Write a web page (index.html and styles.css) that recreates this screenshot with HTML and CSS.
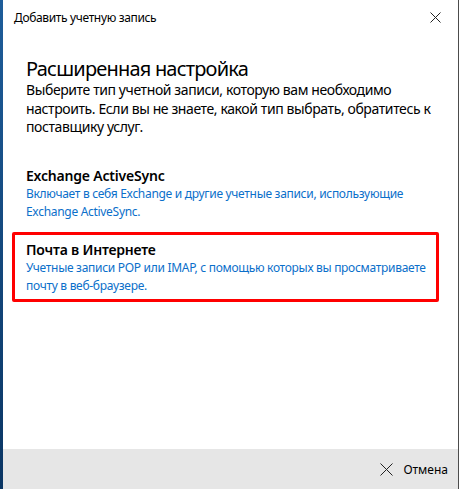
FILE: index.html
```html
<!DOCTYPE html>
<html lang="ru">

<head>
  <meta charset="UTF-8" />
  <meta name="viewport" content="width=device-width, initial-scale=1.0" />
  <title>Добавить учетную запись</title>
  <link rel="stylesheet" href="styles.css">
</head>

<body>
  <div class="desktop">
    <div class="accent"></div>
    <div class="dialog">
      <div class="titlebar">
        <span class="title">Добавить учетную запись</span>
        <svg class="close" width="11" height="11" viewBox="0 0 11 11">
          <path d="M0.5 0.5 L10.5 10.5 M10.5 0.5 L0.5 10.5" stroke="#222" stroke-width="1" fill="none" />
        </svg>
      </div>

      <div class="content">
        <p class="heading">Расширенная настройка</p>
        <p class="intro">
          Выберите тип учетной записи, которую вам необходимо настроить. Если вы не знаете, какой тип выбрать, обратитесь к поставщику услуг.
        </p>

        <div class="option">
          <p class="option-title">Exchange ActiveSync</p>
          <p class="option-desc">Включает в себя Exchange и другие учетные записи, использующие Exchange ActiveSync.</p>
        </div>

        <div class="option selected">
          <p class="option-title">Почта в Интернете</p>
          <p class="option-desc">Учетные записи POP или IMAP, с помощью которых вы просматриваете почту в веб-браузере.</p>
        </div>
      </div>

      <div class="footer">
        <button class="cancel">
          <svg width="13" height="13" viewBox="0 0 13 13">
            <path d="M0.5 0.5 L12.5 12.5 M12.5 0.5 L0.5 12.5" stroke="#222" stroke-width="1" fill="none" />
          </svg>
          Отмена
        </button>
      </div>
    </div>
  </div>
</body>

</html>
```

FILE: styles.css
```css
/* Page */
body {
  margin: 0;
  font-family: 'Segoe UI', 'Noto Sans', 'Open Sans', sans-serif;
  background: #fff;
  color: #000;
}

p {
  margin: 0;
}

.desktop {
  display: flex;
  height: 489px;
  width: 460px;
  overflow: hidden;
}

.accent {
  width: 3px;
  background: linear-gradient(to bottom, #1e5d9a, #0a3563);
}

/* Dialog window */
.dialog {
  flex: 1;
  display: flex;
  flex-direction: column;
  border-right: 1px solid #4c4c4c;
  margin-right: 1px;
  background: #fff;
}

.titlebar {
  display: flex;
  align-items: center;
  justify-content: space-between;
  height: 34px;
  padding: 0 17px 0 11px;
}

.title {
  font-size: 12px;
  letter-spacing: -0.35px;
  color: #000;
}

.content {
  flex: 1;
  padding: 22px 19px 0 9px;
}

.heading {
  font-size: 20px;
  line-height: 25px;
  letter-spacing: -0.8px;
  padding-left: 14px;
  color: #000;
}

.intro {
  font-size: 14px;
  line-height: 18.5px;
  letter-spacing: -0.4px;
  padding-left: 14px;
  margin-bottom: 21px;
}

.option {
  border: 3px solid transparent;
  border-radius: 2px;
  padding: 5px 10px 4px 11px;
  margin-bottom: 4px;
}

.option.selected {
  border-color: #f00;
}

.option-title {
  font-size: 14px;
  font-weight: 600;
  line-height: 19px;
  letter-spacing: -0.2px;
}

.option-desc {
  font-size: 12px;
  line-height: 18px;
  letter-spacing: -0.3px;
  color: #0b6fca;
}

/* Footer */
.footer {
  height: 40px;
  background: #e6e6e6;
  display: flex;
  align-items: center;
  justify-content: flex-end;
  padding-right: 10px;
}

.cancel {
  display: flex;
  align-items: center;
  gap: 10px;
  background: none;
  border: none;
  font-family: inherit;
  font-size: 12px;
  color: #000;
  padding: 0;
}
```
